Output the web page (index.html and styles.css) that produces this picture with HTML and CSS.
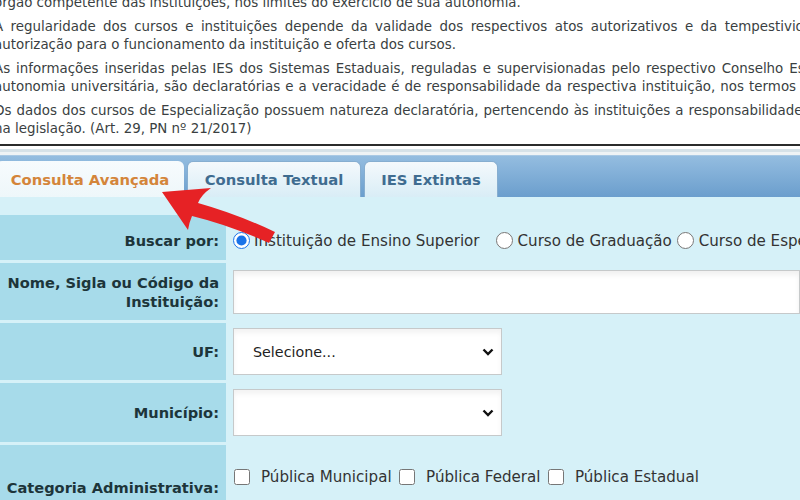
FILE: index.html
```html
<!DOCTYPE html>
<html lang="pt-BR">
<head>
<meta charset="utf-8">
<title>Consulta Avançada</title>
<link rel="stylesheet" href="styles.css">
</head>
<body>
<div class="page">
  <div class="notes">
    <p><span class="ln">órgão competente das instituições, nos limites do exercício de sua autonomia.</span></p>
    <p><span class="ln wide">A regularidade dos cursos e instituições depende da validade dos respectivos atos autorizativos e da tempestividade</span><span class="ln">autorização para o funcionamento da instituição e oferta dos cursos.</span></p>
    <p><span class="ln mid4">As informações inseridas pelas IES dos Sistemas Estaduais, reguladas e supervisionadas pelo respectivo Conselho Estadual</span><span class="ln mid5">autonomia universitária, são declaratórias e a veracidade é de responsabilidade da respectiva instituição, nos termos da</span></p>
    <p><span class="ln mid">Os dados dos cursos de Especialização possuem natureza declaratória, pertencendo às instituições a responsabilidade</span><span class="ln">na legislação. (Art. 29, PN nº 21/2017)</span></p>
  </div>
  <div class="rule"></div>
  <div class="band"></div>
  <div class="tabbar">
    <div class="tab active">Consulta Avançada</div>
    <div class="tab t2">Consulta Textual</div>
    <div class="tab t3">IES Extintas</div>
  </div>
  <div class="form">
    <div class="lbl r1">Buscar por:</div>
    <div class="fld r1">
      <label class="opt"><input type="radio" name="b" checked><span>Instituição de Ensino Superior</span></label>
      <label class="opt o2"><input type="radio" name="b"><span>Curso de Graduação</span></label>
      <label class="opt o3"><input type="radio" name="b"><span>Curso de Especialização</span></label>
    </div>
    <div class="lbl r2">Nome, Sigla ou Código da<br>Instituição:</div>
    <div class="fld r2"><input type="text" class="txt"></div>
    <div class="lbl r3">UF:</div>
    <div class="fld r3">
      <div class="selwrap"><select class="sel"><option>Selecione...</option></select>
        <svg class="chev" width="12" height="8" viewBox="0 0 12 8"><path d="M1.5 1.5 L6 6 L10.5 1.5" fill="none" stroke="#111" stroke-width="2.4"/></svg></div>
    </div>
    <div class="lbl r4">Município:</div>
    <div class="fld r4">
      <div class="selwrap"><select class="sel"><option></option></select>
        <svg class="chev" width="12" height="8" viewBox="0 0 12 8"><path d="M1.5 1.5 L6 6 L10.5 1.5" fill="none" stroke="#111" stroke-width="2.4"/></svg></div>
    </div>
    <div class="lbl r5">Categoria Administrativa:</div>
    <div class="fld r5 checks">
      <label class="chk"><input type="checkbox"><span>Pública Municipal</span></label>
      <label class="chk"><input type="checkbox"><span>Pública Federal</span></label>
      <label class="chk"><input type="checkbox"><span>Pública Estadual</span></label>
    </div>
  </div>
  <svg class="arrow" width="140" height="72" viewBox="150 175 140 72">
    <path d="M162 192 L211 188 Q201 195 198 203 Q237 214 275 232 L269 243 Q229 225 192 216 Q189 223 188 230 Z" fill="#e62225"/>
  </svg>
</div>
</body>
</html>
```
FILE: styles.css
```css
html, body {
  margin: 0;
  padding: 0;
  background: #ffffff;
  overflow: hidden;
}
.page {
  position: relative;
  width: 800px;
  height: 500px;
  overflow: hidden;
  font-family: "DejaVu Sans", Verdana, sans-serif;
}
.notes {
  margin: -6px 0 0 -6px;
  color: #3a3f42;
  font-size: 13.4px;
  line-height: 18px;
}
.notes p {
  margin: 0 0 6px 0;
}
.ln {
  display: block;
  white-space: nowrap;
}
.wide { word-spacing: 3.2px; }
.mid { word-spacing: 0.8px; }
.mid4 { word-spacing: 1.7px; }
.mid5 { word-spacing: 0.8px; }
.rule {
  height: 2px;
  background: #2b2b2b;
  margin-top: 1px;
}
.band {
  height: 9px;
  background: linear-gradient(#ffffff 0, #ffffff 3px, #d6e2e8 3px, #d6e2e8 6px, #eef3f5 6px);
}
.tabbar {
  height: 42px;
  box-sizing: border-box;
  border-top: 1px solid #a9c9e4;
  background: linear-gradient(#94bde0, #6b9ecd);
  display: flex;
  align-items: flex-end;
  gap: 3px;
}
.tab {
  height: 36px;
  box-sizing: border-box;
  display: flex;
  align-items: center;
  justify-content: center;
  font-weight: bold;
  font-size: 14.8px;
  border-radius: 6px 6px 0 0;
}
.tab.active {
  width: 188px;
  margin-left: -4px;
  background: linear-gradient(#f7fbfd, #eef7fa);
  color: #d4853a;
}
.tab.t2, .tab.t3 {
  background: linear-gradient(#f4f9fc, #d9edf6);
  color: #3f6c90;
  border: 1px solid #86aed0;
  border-bottom: none;
}
.tab.t2 { width: 174px; }
.tab.t3 { width: 134px; }
.form {
  background: #d6f1f8;
  padding-top: 18px;
  display: grid;
  grid-template-columns: 226px 1fr;
  grid-template-rows: 45px 57px 57px 59px 84px;
  row-gap: 3px;
}
.lbl {
  background: #a7dbea;
  color: #1d353a;
  font-weight: bold;
  font-size: 14.6px;
  line-height: 19px;
  text-align: right;
  padding-right: 7px;
  display: flex;
  flex-direction: column;
  justify-content: center;
  align-items: flex-end;
}
.lbl.r1, .fld.r1 { padding-top: 6px; }
.lbl.r5 { justify-content: flex-start; padding-top: 33px; }
.fld {
  display: flex;
  align-items: center;
  padding-left: 7px;
  color: #333;
  font-size: 15.1px;
  white-space: nowrap;
  min-width: 0;
}
.opt, .chk {
  display: flex;
  align-items: center;
}
.opt input {
  width: 17px;
  height: 17px;
  margin: 0 4px 0 0;
  accent-color: #1a73e8;
}
.opt.o2 { margin-left: 16px; }
.opt.o3 { margin-left: 5px; }
.opt.o2 input, .opt.o3 input { margin-right: 5px; }
.txt {
  width: 600px;
  height: 44px;
  box-sizing: border-box;
  border: 1px solid #c6c9ca;
  background: #fff;
  box-shadow: inset 0 4px 5px rgba(0,0,0,0.06);
  margin: 0;
}
.selwrap {
  position: relative;
  width: 269px;
  height: 47px;
}
.sel {
  appearance: none;
  -webkit-appearance: none;
  width: 100%;
  height: 100%;
  box-sizing: border-box;
  border: 1px solid #c6c9ca;
  background: #fff;
  box-shadow: inset 0 4px 5px rgba(0,0,0,0.05);
  font-family: "DejaVu Sans", Verdana, sans-serif;
  font-size: 14.3px;
  color: #222;
  padding-left: 19px;
  margin: 0;
  border-radius: 0;
}
.chev {
  position: absolute;
  right: 8px;
  top: 20px;
}
.checks {
  align-items: flex-start;
  padding-top: 23px;
  padding-left: 8px;
}
.chk input {
  width: 16px;
  height: 16px;
  margin: 0 11px 0 0;
}
.chk span { margin-right: 7.5px; }
.arrow {
  position: absolute;
  left: 150px;
  top: 175px;
}
```
